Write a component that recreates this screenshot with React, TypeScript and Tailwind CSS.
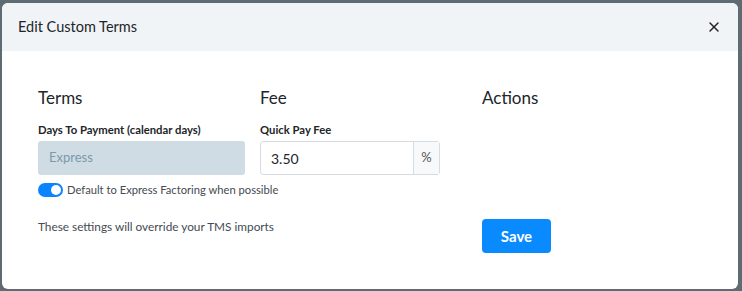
import { X } from 'lucide-react';

export default function App() {
  return (
    <div className="h-[291px] w-[742px] bg-[#5f6b73] pt-[3px] pl-[2px] font-['Lato',sans-serif]">
      <div className="w-[736px] h-[286px] rounded-md bg-white overflow-hidden">
        <div className="h-[48px] bg-[#f0f4f7] flex items-center justify-between pl-[16px] pr-[16px]">
          <h2 className="text-[14.5px] text-[#212529]">Edit Custom Terms</h2>
          <X className="w-[16px] h-[16px] text-[#222]" strokeWidth={2.2} />
        </div>

        <div className="pl-[36px] pt-[35px]">
          <div className="grid grid-cols-[222px_222px_222px]">
            <div>
              <h3 className="text-[17px] text-[#212529] leading-[24px]">Terms</h3>
              <label className="block mt-[13px] text-[11.3px] font-bold text-[#212529] leading-[14px]">
                Days To Payment (calendar days)
              </label>
              <div className="mt-[4px] w-[207px] h-[34px] rounded-[3px] bg-[#cfdce3] flex items-center px-[11px] text-[13px] text-[#7d99ad]">
                Express
              </div>
              <div className="mt-[8px] flex items-center gap-[4px] w-[300px]">
                <div className="w-[25px] h-[14px] rounded-full bg-[#0a84ff] flex items-center justify-end pr-[2px]">
                  <div className="w-[10px] h-[10px] rounded-full bg-white" />
                </div>
                <span className="text-[11.2px] leading-[14px] text-[#444b52]">Default to Express Factoring when possible</span>
              </div>
            </div>

            <div>
              <h3 className="text-[17px] text-[#212529] leading-[24px]">Fee</h3>
              <label className="block mt-[13px] text-[11.3px] font-bold text-[#212529] leading-[14px]">
                Quick Pay Fee
              </label>
              <div className="mt-[4px] w-[180px] h-[34px] flex border border-[#d6dde2] rounded-[3px]">
                <div className="flex-1 flex items-center px-[10px] text-[14px] text-[#212529]">3.50</div>
                <div className="w-[26px] border-l border-[#d6dde2] bg-[#f8f9fa] flex items-center justify-center text-[13px] text-[#555]">
                  %
                </div>
              </div>
            </div>

            <div>
              <h3 className="text-[17px] text-[#212529] leading-[24px]">Actions</h3>
            </div>
          </div>

          <div className="grid grid-cols-[444px_222px] mt-[22px]">
            <p className="text-[11.8px] leading-[16px] text-[#444b52]">These settings will override your TMS imports</p>
            <div>
              <button className="w-[69px] h-[34px] rounded-[4px] bg-[#0a8aff] text-white font-bold text-[15px]">
                Save
              </button>
            </div>
          </div>
        </div>
      </div>
    </div>
  );
}
